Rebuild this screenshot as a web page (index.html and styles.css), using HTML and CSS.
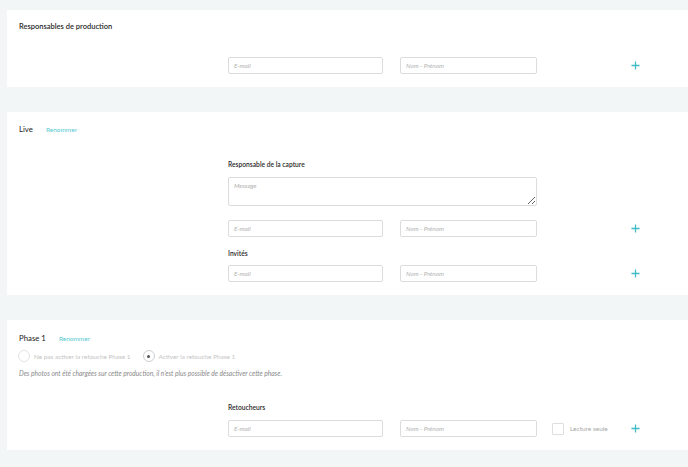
FILE: index.html
```html
<!DOCTYPE html>
<html lang="fr">
<head>
<meta charset="utf-8">
<link rel="stylesheet" href="styles.css">
</head>
<body>
<main class="page">
  <section class="card card-prod">
    <h2 class="card-title">Responsables de production</h2>
    <div class="fields">
      <div class="row row-first">
        <input class="field field-email" type="text" placeholder="E-mail">
        <input class="field field-name" type="text" placeholder="Nom - Prénom">
        <div class="extra"></div>
        <svg class="plus" viewBox="0 0 10 10"><path d="M5 0.5V9.5M0.5 5H9.5"/></svg>
      </div>
    </div>
  </section>

  <section class="card card-live">
    <div class="card-head">
      <h2 class="card-title">Live</h2>
      <a class="rename">Renommer</a>
    </div>
    <div class="fields">
      <div class="label label-capture">Responsable de la capture</div>
      <textarea class="message" placeholder="Message"></textarea>
      <div class="row row-capture">
        <input class="field field-email" type="text" placeholder="E-mail">
        <input class="field field-name" type="text" placeholder="Nom - Prénom">
        <div class="extra"></div>
        <svg class="plus" viewBox="0 0 10 10"><path d="M5 0.5V9.5M0.5 5H9.5"/></svg>
      </div>
      <div class="label label-guests">Invités</div>
      <div class="row row-guests">
        <input class="field field-email" type="text" placeholder="E-mail">
        <input class="field field-name" type="text" placeholder="Nom - Prénom">
        <div class="extra"></div>
        <svg class="plus" viewBox="0 0 10 10"><path d="M5 0.5V9.5M0.5 5H9.5"/></svg>
      </div>
    </div>
  </section>

  <section class="card card-phase">
    <div class="card-head card-head-phase">
      <h2 class="card-title">Phase 1</h2>
      <a class="rename">Renommer</a>
    </div>
    <div class="radios">
      <label class="radio"><span class="dot"></span>Ne pas activer la retouche Phase 1</label>
      <label class="radio radio-on"><span class="dot"></span>Activer la retouche Phase 1</label>
    </div>
    <p class="note">Des photos ont été chargées sur cette production, il n’est plus possible de désactiver cette phase.</p>
    <div class="fields">
      <div class="label label-retouch">Retoucheurs</div>
      <div class="row row-retouch">
        <input class="field field-email" type="text" placeholder="E-mail">
        <input class="field field-name" type="text" placeholder="Nom - Prénom">
        <div class="extra">
          <span class="check"></span>
          <span class="check-label">Lecture seule</span>
        </div>
        <svg class="plus" viewBox="0 0 10 10"><path d="M5 0.5V9.5M0.5 5H9.5"/></svg>
      </div>
    </div>
  </section>
</main>
</body>
</html>
```

FILE: styles.css
```css
* { box-sizing: border-box; }

html, body {
  margin: 0;
  padding: 0;
  background: #f3f6f7;
  font-family: Lato, "Open Sans", sans-serif;
  color: #333;
  overflow: hidden;
}

.page {
  display: flex;
  flex-direction: column;
  gap: 25px;
  padding: 10px 0 0 7px;
  width: 700px;
}

.card {
  background: #fff;
  display: flex;
  flex-direction: column;
  padding: 0 0 13px 12px;
}

.card-title {
  margin: 0;
  font-size: 7.5px;
  line-height: 14px;
  font-weight: 600;
  color: #2a2a2a;
}

.card-prod .card-title { margin-top: 10px; }

.card-head {
  display: flex;
  align-items: center;
  margin-top: 10px;
  height: 14px;
}

.card-head .card-title {
  font-size: 7.8px;
  font-weight: 400;
  color: #222;
}

.card-head-phase { margin-top: 11px; }

.rename {
  font-size: 6.5px;
  color: #58c9cf;
  margin-left: 13px;
}

.fields {
  display: flex;
  flex-direction: column;
  margin-left: 209px;
}

.label {
  font-size: 6.7px;
  line-height: 14px;
  font-weight: 600;
  color: #2a2a2a;
}

.label-capture { margin-top: 21px; }
.label-guests { margin-top: 9px; }
.label-retouch { margin-top: 21px; }

.row {
  display: flex;
  align-items: center;
  height: 17px;
}

.row-first { margin-top: 23px; }
.row-capture { margin-top: 14px; }
.row-guests { margin-top: 5px; }
.row-retouch { margin-top: 6px; }

.field {
  height: 17px;
  border: 1px solid #dcdcdc;
  border-radius: 2px;
  padding: 0 5px;
  font-family: Lato, sans-serif;
  font-size: 6.3px;
  background: #fff;
  outline: none;
}

.field::placeholder,
.message::placeholder {
  color: #b2b2b2;
  font-style: italic;
}

.field-email { width: 155px; }
.field-name { width: 137px; margin-left: 17px; }

.extra {
  width: 94px;
  display: flex;
  align-items: center;
}

.message {
  margin-top: 6px;
  width: 309px;
  height: 29px;
  border: 1px solid #dcdcdc;
  border-radius: 2px;
  padding: 4px 5px;
  font-family: Lato, sans-serif;
  font-size: 6.3px;
  resize: both;
  outline: none;
}

.plus {
  width: 9px;
  height: 9px;
  fill: none;
  stroke: #3fbcc3;
  stroke-width: 1.4;
}

.radios {
  display: flex;
  align-items: center;
  margin-top: 5px;
  margin-left: -1px;
  height: 12px;
  gap: 12px;
}

.radio {
  display: flex;
  align-items: center;
  font-size: 6.4px;
  color: #c4c4c4;
}

.dot {
  width: 12px;
  height: 12px;
  border: 1px solid #e3e3e3;
  border-radius: 50%;
  margin-right: 4px;
  display: flex;
  align-items: center;
  justify-content: center;
}

.radio-on .dot { border-color: #cfcfcf; }

.radio-on .dot::after {
  content: "";
  width: 3px;
  height: 3px;
  border-radius: 50%;
  background: #555;
}

.note {
  margin: 5px 0 0;
  font-size: 6.65px;
  line-height: 12px;
  font-style: italic;
  color: #8a8a8a;
}

.check {
  width: 12px;
  height: 12px;
  border: 1px solid #dedede;
  border-radius: 1px;
  margin-left: 15px;
}

.check-label {
  font-size: 6.5px;
  color: #a8a8a8;
  margin-left: 6px;
}
```
